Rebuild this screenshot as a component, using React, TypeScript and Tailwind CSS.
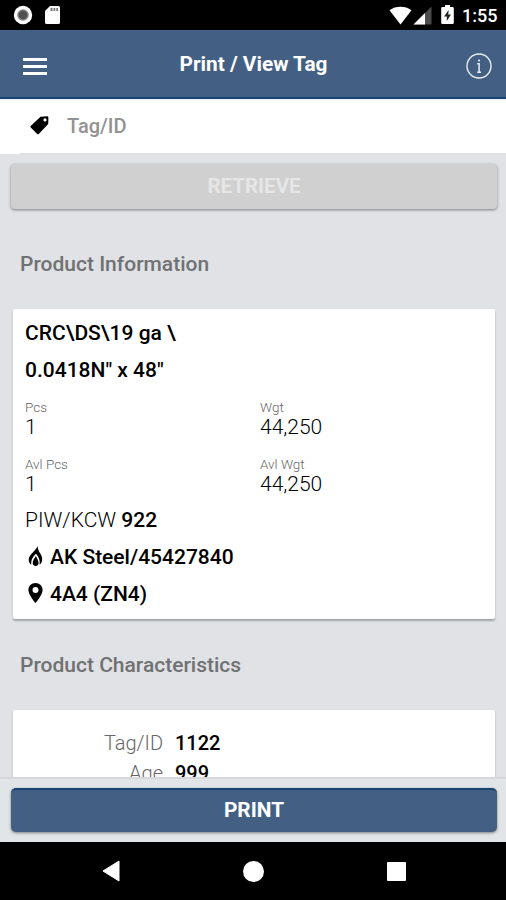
import React from "react";

const StatusBar = () => (
  <div className="flex h-[30px] shrink-0 items-center bg-black pl-[13px] pr-[9px] text-white">
    <svg width="20" height="20" viewBox="0 0 20 20">
      <circle cx="10" cy="10" r="9.2" fill="#fff" />
      <circle cx="10" cy="10" r="5.8" fill="#8a8a8a" />
      <circle cx="10" cy="10" r="4.4" fill="#505050" />
    </svg>
    <svg className="ml-[11px]" width="17" height="20" viewBox="0 0 17 20">
      <path d="M6 1h8.500q1.500 0 1.500 1.500v15q0 1.500-1.500 1.500h-12q-1.500 0-1.500-1.500V6z" fill="#fff" />
      <path d="M6.500 3h2v3h-2zM9.500 3h1.800v3H9.500zM12.300 3h1.700v3h-1.700z" fill="#777" />
    </svg>
    <div className="flex-1" />
    <svg width="23" height="19" viewBox="0 0 23 19">
      <path d="M11.500 18.500 0.500 4.200C6.800-.4 16.200-.4 22.500 4.200z" fill="#fff" />
    </svg>
    <svg className="ml-px" width="19" height="19" viewBox="0 0 19 19">
      <path d="M18.500.5v18H.5z" fill="#4b4b4b" />
      <path d="M12 7v11.500H.5z" fill="#fff" />
    </svg>
    <svg className="ml-[9px]" width="13" height="20" viewBox="0 0 13 20">
      <path d="M4 0h5v2h2.500q1.300 0 1.300 1.300v14.400q0 1.300-1.300 1.300h-10q-1.300 0-1.300-1.300V3.300Q.2 2 1.500 2H4z" fill="#fff" />
      <path d="M7.600 5 3 11.500h2.800V16L10 9.500H7.300z" fill="#222" />
    </svg>
    <span className="ml-[8px] mt-[2px] w-[35px] whitespace-nowrap text-[18px] font-medium leading-5">1:55</span>
  </div>
);

const Header = () => (
  <div className="flex h-[69px] shrink-0 items-center justify-between border-b-2 border-[#154472] bg-[#436084] pl-[23px] pr-[14px] text-white">
    <div className="flex w-6 flex-col gap-[4px] pt-[6px]">
      <span className="h-[3px] bg-white" />
      <span className="h-[3px] bg-white" />
      <span className="h-[3px] bg-white" />
    </div>
    <h1 className="pr-[6px] text-[20.800px] font-bold leading-6">Print / View Tag</h1>
    <svg className="mt-[4px]" width="26" height="26" viewBox="0 0 26 26" fill="none" stroke="#e9eef5">
      <circle cx="13" cy="13" r="12" strokeWidth="1.400" />
      <path d="M11.200 10.800h1.900v8.200M11.200 19.200h3.900" strokeWidth="1.500" />
      <circle cx="13" cy="7.500" r="1.100" fill="#e9eef5" stroke="none" />
    </svg>
  </div>
);

const Field = ({ label, value }: { label: string; value: string }) => (
  <div className="w-[235px]">
    <div className="text-[13.500px] font-light leading-[16px] text-[#666]">{label}</div>
    <div className="text-[21px] font-light leading-[24px] text-black">{value}</div>
  </div>
);

const SectionTitle = ({ children }: { children: React.ReactNode }) => (
  <h2 className="pl-[20px] text-[21px] font-medium leading-6 text-[#707173]">{children}</h2>
);

const ProductCard = () => (
  <div className="ml-[13px] mr-[11px] mt-[33px] h-[310px] rounded-[2px] bg-white pl-[12px] pt-[6px] text-[21px] font-medium text-black shadow-[0_2px_2px_rgba(0,0,0,0.28)]">
    <div className="h-[36px] leading-[36px]">CRC\DS\19 ga \</div>
    <div className="h-[38px] leading-[38px]">0.0418N" x 48"</div>
    <div className="mt-[10px] flex h-[57px]">
      <Field label="Pcs" value="1" />
      <Field label="Wgt" value="44,250" />
    </div>
    <div className="flex h-[46px]">
      <Field label="Avl Pcs" value="1" />
      <Field label="Avl Wgt" value="44,250" />
    </div>
    <div className="h-[38px] leading-[37px]">
      <span className="font-light">PIW/KCW</span> 922
    </div>
    <div className="flex h-[36px] items-center">
      <svg className="-mt-[4px] ml-[3px] mr-[7px]" width="15" height="20" viewBox="0 0 15 20">
        <path d="M9.800 0C8.500 4 1 8.500.7 13.500c-.1 2.500.8 4 2.600 5.300C2.800 14 5 10.500 8 7.800c2.600 3 4.300 6.500 3.600 11C14.800 16.500 15 11.500 12.300 7.500 11 5.500 9.600 3 9.800 0z" />
        <path d="M7.900 10C6.200 12.500 4.400 15 4.700 17.500c.2 1.500 1.500 2.500 3 2.500s2.900-1 2.900-3c0-2.500-1.600-4.500-2.700-7z" />
      </svg>
      AK Steel/45427840
    </div>
    <div className="flex h-[37px] items-center">
      <svg className="-mt-[4px] ml-[3px] mr-[7px]" width="15" height="20" viewBox="0 0 15 20">
        <path fillRule="evenodd" d="M7.500 0C3.400 0 .4 3 .4 7c0 5 7.100 13 7.100 13s7.100-8 7.100-13c0-4-3-7-7.100-7zm0 4a3 3 0 1 1 0 6 3 3 0 0 1 0-6z" />
      </svg>
      4A4 (ZN4)
    </div>
  </div>
);

const Characteristic = ({ label, value }: { label: string; value: string }) => (
  <div className="flex h-[30px] items-center text-[20px]">
    <span className="w-[150px] text-right font-light text-[#666]">{label}</span>
    <span className="ml-[12px] font-medium text-black">{value}</span>
  </div>
);

export default function App() {
  return (
    <div className="flex h-[900px] w-[506px] flex-col overflow-hidden bg-[#e0e2e6] font-['Roboto',sans-serif]">
      <StatusBar />
      <Header />
      <main className="min-h-0 flex-1 overflow-hidden">
        <div className="flex h-[54px] items-center border-t border-[#f0eef1] bg-white pb-[2px] pl-[30px]">
          <svg width="19" height="19" viewBox="0 0 19 19">
            <path fillRule="evenodd" d="M10.500.7 17 .3q1.400 0 1.400 1.400L18.200 8 8.800 18q-.8.700-1.600 0L.7 11.500q-.7-.8 0-1.600zM15 2.300a1.600 1.600 0 1 0 0 3.200 1.600 1.600 0 0 0 0-3.200z" />
          </svg>
          <span className="ml-[18px] text-[20px] font-medium leading-6 text-[#929292]">Tag/ID</span>
        </div>
        {/* inset divider: starts 20px in, like the input line */}
        <div className="h-px bg-white pl-[20px]">
          <div className="h-px bg-[#dedede]" />
        </div>
        <button className="ml-[11px] mt-[10px] block h-[45px] w-[486px] rounded-[4px] bg-[#d0d0d0] pb-[1px] text-[20.500px] font-bold text-[#e6e6e6] shadow-[0_1px_3px_rgba(0,0,0,0.45)]">
          RETRIEVE
        </button>
        <div className="mt-[43px]">
          <SectionTitle>Product Information</SectionTitle>
        </div>
        <ProductCard />
        <div className="mt-[34px]">
          <SectionTitle>Product Characteristics</SectionTitle>
        </div>
        <div className="ml-[13px] mr-[11px] mt-[33px] h-[160px] rounded-[2px] bg-white pt-[18px] shadow-[0_1px_2px_rgba(0,0,0,0.25)]">
          <Characteristic label="Tag/ID" value="1122" />
          <Characteristic label="Age" value="999" />
        </div>
      </main>
      <footer className="h-[65px] shrink-0 border-t-2 border-[#d6d8db] bg-[#e2e5e8] pl-[11px] pt-[9px]">
        <button className="block h-[44px] w-[486px] rounded-[5px] border-t-2 border-[#154472] bg-[#436084] pb-[1px] text-[20.800px] font-bold text-white shadow-[0_1px_3px_rgba(0,0,0,0.45)]">
          PRINT
        </button>
      </footer>
      <nav className="flex h-[58px] shrink-0 items-center bg-black pl-[102px]">
        <svg width="18" height="22" viewBox="0 0 18 22">
          <path d="M17 1v20L1 11z" fill="#fff" stroke="#fff" strokeLinejoin="round" />
        </svg>
        <span className="ml-[123px] h-[21px] w-[21px] rounded-full bg-white" />
        <span className="ml-[123px] mt-[1px] h-[19px] w-[19px] rounded-[1px] bg-white" />
      </nav>
    </div>
  );
}
